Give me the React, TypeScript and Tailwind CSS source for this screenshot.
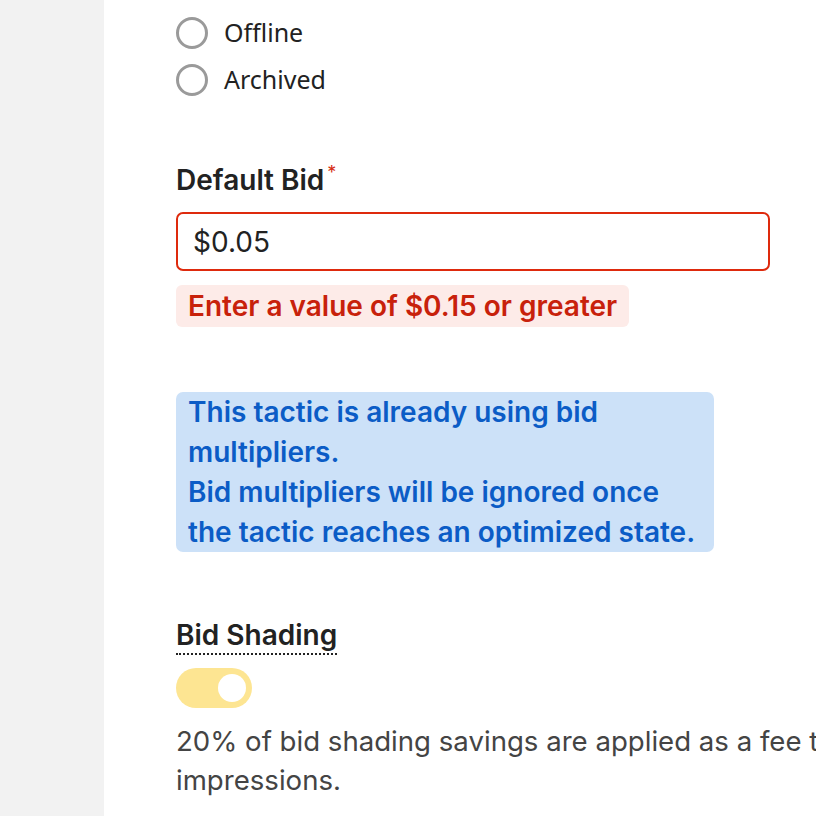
export default function App() {
  return (
    <div className="flex h-[816px] w-[816px] overflow-hidden bg-white font-['Inter',sans-serif]">
      <div className="w-[104px] shrink-0 bg-[#f2f2f2]" />
      <div className="w-[764px] shrink-0 pl-[72px] pt-[9px]">
        {/* Status radios */}
        <div className="flex flex-col">
          {["Offline", "Archived"].map((label) => (
            <label key={label} className="flex h-[47px] items-center gap-4">
              <span className="h-8 w-8 rounded-full border-[3px] border-[#9a9a9a] bg-white" />
              <span className="font-['Noto_Sans',sans-serif] text-[25px] text-[#222]">{label}</span>
            </label>
          ))}
        </div>

        {/* Default bid */}
        <div className="mt-[63px] flex items-start">
          <span className="text-[28px] font-semibold leading-[28px] text-[#222]">Default Bid</span>
          <span className="ml-[3px] -mt-[2px] text-[18px] leading-none text-[#d62d12]">*</span>
        </div>
        <div className="mt-[18px] flex h-[59px] w-[594px] items-center rounded-[7px] border-2 border-[#de2a0d] px-[15px] text-[28px] text-[#222]">
          $0.05
        </div>
        <div className="mt-[14px] inline-flex h-[42px] items-center rounded-[6px] bg-[#fdebe8] px-[12px] text-[28px] font-semibold text-[#c8210b]">
          Enter a value of $0.15 or greater
        </div>

        {/* Info */}
        <div className="mt-[65px] w-[538px] rounded-[7px] bg-[#cce1f8] px-[12px] text-[28px] font-semibold leading-[40px] text-[#0b5cc6]">
          This tactic is already using bid multipliers.
          <br />
          Bid multipliers will be ignored once the tactic reaches an optimized state.
        </div>

        {/* Bid shading */}
        <div className="mt-[67px] flex">
          <span className="border-b-2 border-dotted border-[#222] pb-[2px] text-[28px] font-semibold leading-[32px] text-[#222]">
            Bid Shading
          </span>
        </div>
        <div className="mt-[13px] flex h-[40px] w-[76px] items-center justify-end rounded-full bg-[#fde592] pr-[6px]">
          <span className="h-[28px] w-[28px] rounded-full bg-white" />
        </div>
        <p className="mt-[14px] text-[27.6px] leading-[39px] text-[#444]">
          20% of bid shading savings are applied as a fee to impressions.
        </p>
      </div>
    </div>
  );
}
